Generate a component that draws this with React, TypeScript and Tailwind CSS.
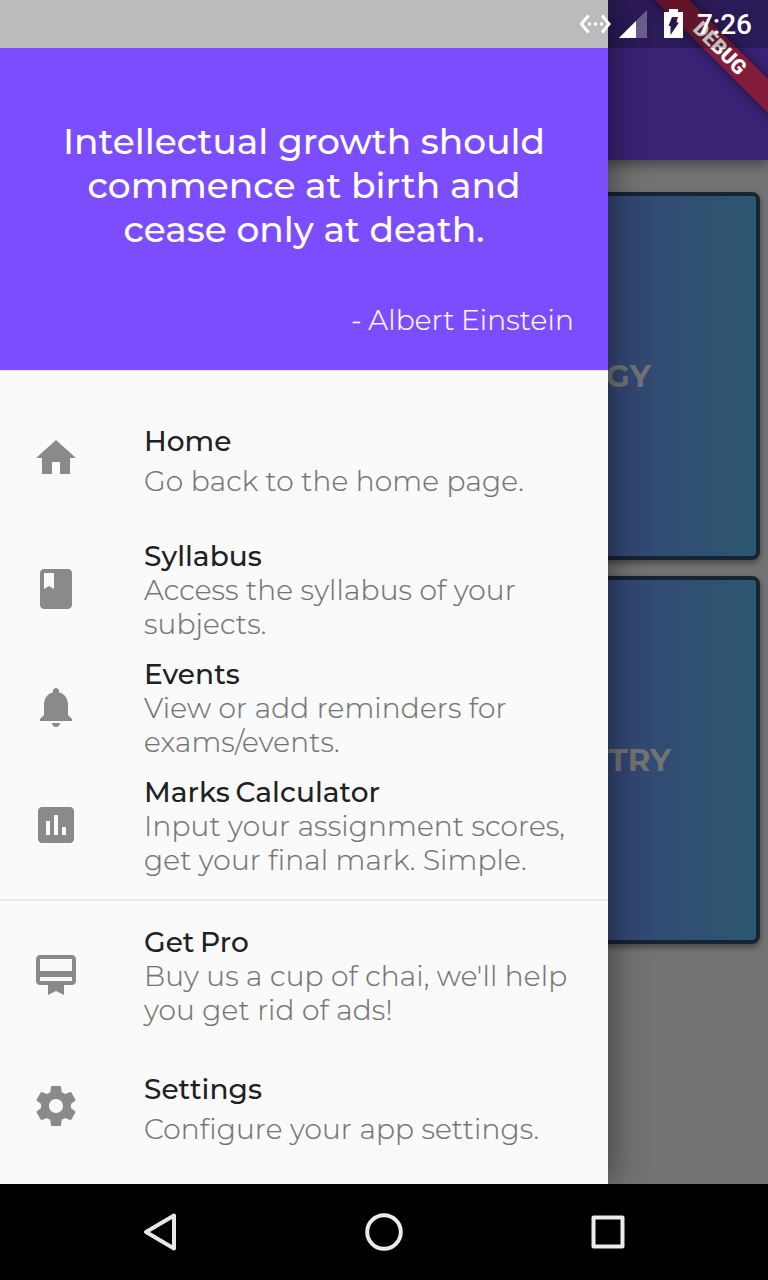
import React from "react";

const ICONS = {
  home: "M10 20v-6h4v6h5v-8h3L12 3 2 12h3v8z",
  book: "M18 2H6c-1.1 0-2 .9-2 2v16c0 1.1.9 2 2 2h12c1.1 0 2-.9 2-2V4c0-1.1-.9-2-2-2zM6 4h5v8l-2.5-1.5L6 12V4z",
  bell: "M12 22c1.1 0 2-.9 2-2h-4c0 1.1.89 2 2 2zm6-6v-5c0-3.07-1.64-5.64-4.5-6.32V4c0-.83-.67-1.5-1.5-1.5s-1.5.67-1.5 1.5v.68C7.63 5.36 6 7.92 6 11v5l-2 2v1h16v-1l-2-2z",
  chart:
    "M19 3H5c-1.1 0-2 .9-2 2v14c0 1.1.9 2 2 2h14c1.1 0 2-.9 2-2V5c0-1.1-.9-2-2-2zM9 17H7v-7h2v7zm4 0h-2V7h2v10zm4 0h-2v-4h2v4z",
  membership:
    "M20 2H4c-1.11 0-2 .89-2 2v11c0 1.11.89 2 2 2h4v5l4-2 4 2v-5h4c1.11 0 2-.89 2-2V4c0-1.11-.89-2-2-2zm0 13H4v-2h16v2zm0-5H4V4h16v6z",
  settings:
    "M19.43 12.98c.04-.32.07-.64.07-.98s-.03-.66-.07-.98l2.11-1.65c.19-.15.24-.42.12-.64l-2-3.46c-.12-.22-.39-.3-.61-.22l-2.49 1c-.52-.4-1.08-.73-1.69-.98l-.38-2.65C14.46 2.18 14.25 2 14 2h-4c-.25 0-.46.18-.49.42l-.38 2.65c-.61.25-1.17.59-1.69.98l-2.49-1c-.23-.09-.49 0-.61.22l-2 3.46c-.13.22-.07.49.12.64l2.11 1.65c-.04.32-.07.65-.07.98s.03.66.07.98l-2.11 1.65c-.19.15-.24.42-.12.64l2 3.46c.12.22.39.3.61.22l2.49-1c.52.4 1.08.73 1.69.98l.38 2.65c.03.24.24.42.49.42h4c.25 0 .46-.18.49-.42l.38-2.65c.61-.25 1.17-.59 1.69-.98l2.49 1c.23.09.49 0 .61-.22l2-3.46c.12-.22.07-.49-.12-.64l-2.11-1.65zM12 15.5c-1.93 0-3.5-1.57-3.5-3.5s1.57-3.5 3.5-3.5 3.5 1.57 3.5 3.5-1.57 3.5-3.5 3.5z",
};

type Item = { icon: keyof typeof ICONS; title: string; body: string[] };

const PRIMARY: Item[] = [
  { icon: "home", title: "Home", body: ["Go back to the home page."] },
  { icon: "book", title: "Syllabus", body: ["Access the syllabus of your", "subjects."] },
  { icon: "bell", title: "Events", body: ["View or add reminders for", "exams/events."] },
  { icon: "chart", title: "Marks Calculator", body: ["Input your assignment scores,", "get your final mark. Simple."] },
];

const SECONDARY: Item[] = [
  { icon: "membership", title: "Get Pro", body: ["Buy us a cup of chai, we'll help", "you get rid of ads!"] },
  { icon: "settings", title: "Settings", body: ["Configure your app settings."] },
];

function Tile({ item }: { item: Item }) {
  const short = item.body.length === 1;
  return (
    <li className={`flex items-center pl-8 ${short ? "h-36" : "h-[118px]"}`}>
      <svg viewBox="0 0 24 24" className="size-12 shrink-0 fill-[#8a8a8a]">
        <path d={ICONS[item.icon]} />
      </svg>
      <div
        className={`ml-16 flex flex-col items-start text-[28px] leading-[34px] whitespace-nowrap ${short ? "gap-1.5 pt-1.5" : "pt-0.5"}`}
      >
        <span className="font-medium tracking-[0.05px] [word-spacing:-2px] text-[#212121]">{item.title}</span>
        <div className="flex flex-col items-start font-light tracking-[0.17px] text-[#737373] [-webkit-text-stroke:0.2px_#737373]">
          {item.body.map((line) => (
            <span key={line}>{line}</span>
          ))}
        </div>
      </div>
    </li>
  );
}

function SubjectCard({ name }: { name: string }) {
  return (
    <div className="flex size-[368px] items-center justify-center rounded-lg border-4 border-black/54 bg-linear-to-r from-[#7c4dff] to-[#60c0f3] [background-origin:border-box] text-[31px] font-bold text-[#fafafa] shadow-[0_3px_6px_rgba(0,0,0,0.4)]">
      {name}
    </div>
  );
}

function StatusBar() {
  return (
    <div className="absolute inset-x-0 top-0 flex h-12 items-start justify-end bg-black/25 pr-4">
      <svg className="h-12 w-[119px]" viewBox="576 0 119 48" fill="none">
        <path d="M588.5 15.500 581.500 24l7 8.500M602 15.500l7 8.500-7 8.500" stroke="#fff" strokeWidth="3" />
        <path d="M588 22.500h3v3h-3zM594 22.500h3v3h-3zM600 22.500h3v3h-3z" fill="#fff" />
        <path d="M647 10v28h-28z" fill="#fff" fillOpacity=".3" />
        <path d="M636 21v17h-17z" fill="#fff" />
        <path
          fillRule="evenodd"
          fill="#fff"
          d="M669 9h9v3h5v26h-19V12h5zM672 17h6l-1.500 5.500H679L670.500 35v-9H668.500z"
        />
      </svg>
      <span className="pt-[1px] pl-[2px] font-['Roboto',sans-serif] text-[28px] leading-[48px] font-medium text-white">7:26</span>
    </div>
  );
}

function NavBar() {
  return (
    <nav className="flex h-24 items-center justify-around bg-black px-12">
      <svg className="size-12" viewBox="0 0 48 48" fill="none" stroke="#e8e8e8" strokeWidth="4" strokeLinejoin="round">
        <path d="M10 24 38 7.500v33z" />
      </svg>
      <svg className="size-12" viewBox="0 0 48 48" fill="none" stroke="#ebebeb" strokeWidth="4">
        <circle cx="24" cy="24" r="16.8" />
      </svg>
      <svg className="size-12" viewBox="0 0 48 48" fill="none" stroke="#ebebeb" strokeWidth="4" strokeLinejoin="round">
        <path d="M9.500 9.500h29v29h-29z" />
      </svg>
    </nav>
  );
}

export default function App() {
  return (
    <div className="relative flex h-[1280px] w-[768px] flex-col overflow-hidden bg-[#fafafa] font-['Montserrat','Inter',sans-serif]">
      <main className="relative h-[1184px] overflow-hidden">
        <div className="relative h-40 bg-[#7c4dff] shadow-[0_6px_10px_rgba(0,0,0,0.35)]" />
        <div className="flex flex-col items-end gap-4 pt-8 pr-2">
          <SubjectCard name="BIOLOGY" />
          <SubjectCard name="CHEMISTRY" />
        </div>

        <div className="absolute inset-0 bg-black/54" />

        <aside className="absolute inset-y-0 left-0 flex w-[608px] flex-col bg-[#fafafa] shadow-[4px_0_32px_rgba(0,0,0,0.42)]">
          <header className="mt-12 flex h-[323px] flex-col border-b border-[#e6e6e6] bg-[#7c4dff] pt-[71px] text-white">
            <div className="flex flex-col items-center text-[36px] leading-[44px] font-medium tracking-[-0.03px] whitespace-nowrap">
              <span>Intellectual growth should</span>
              <span>commence at birth and</span>
              <span>cease only at death.</span>
            </div>
            <span className="mt-[52px] self-end pr-[34px] text-[28px] leading-[34px] font-light tracking-[0.17px] [word-spacing:-1px] [-webkit-text-stroke:0.2px_#fff]">
              - Albert Einstein
            </span>
          </header>
          <ul className="pt-[15px]">
            {PRIMARY.map((i) => (
              <Tile key={i.title} item={i} />
            ))}
          </ul>
          <div className="flex h-8 items-center">
            <div className="h-0.5 w-full bg-[#e9e9e9]" />
          </div>
          <ul>
            {SECONDARY.map((i) => (
              <Tile key={i.title} item={i} />
            ))}
          </ul>
        </aside>

        <div className="absolute top-0 right-0 size-40 overflow-hidden">
          <div className="absolute top-9 -right-[72px] flex h-6 w-60 rotate-45 items-center justify-center bg-[#b01818]/63 font-['Roboto',sans-serif] text-[20.4px] leading-6 font-black text-white shadow-[0_0_12px_rgba(0,0,0,0.5)]">
            DEBUG
          </div>
        </div>
        <StatusBar />
      </main>
      <NavBar />
    </div>
  );
}
